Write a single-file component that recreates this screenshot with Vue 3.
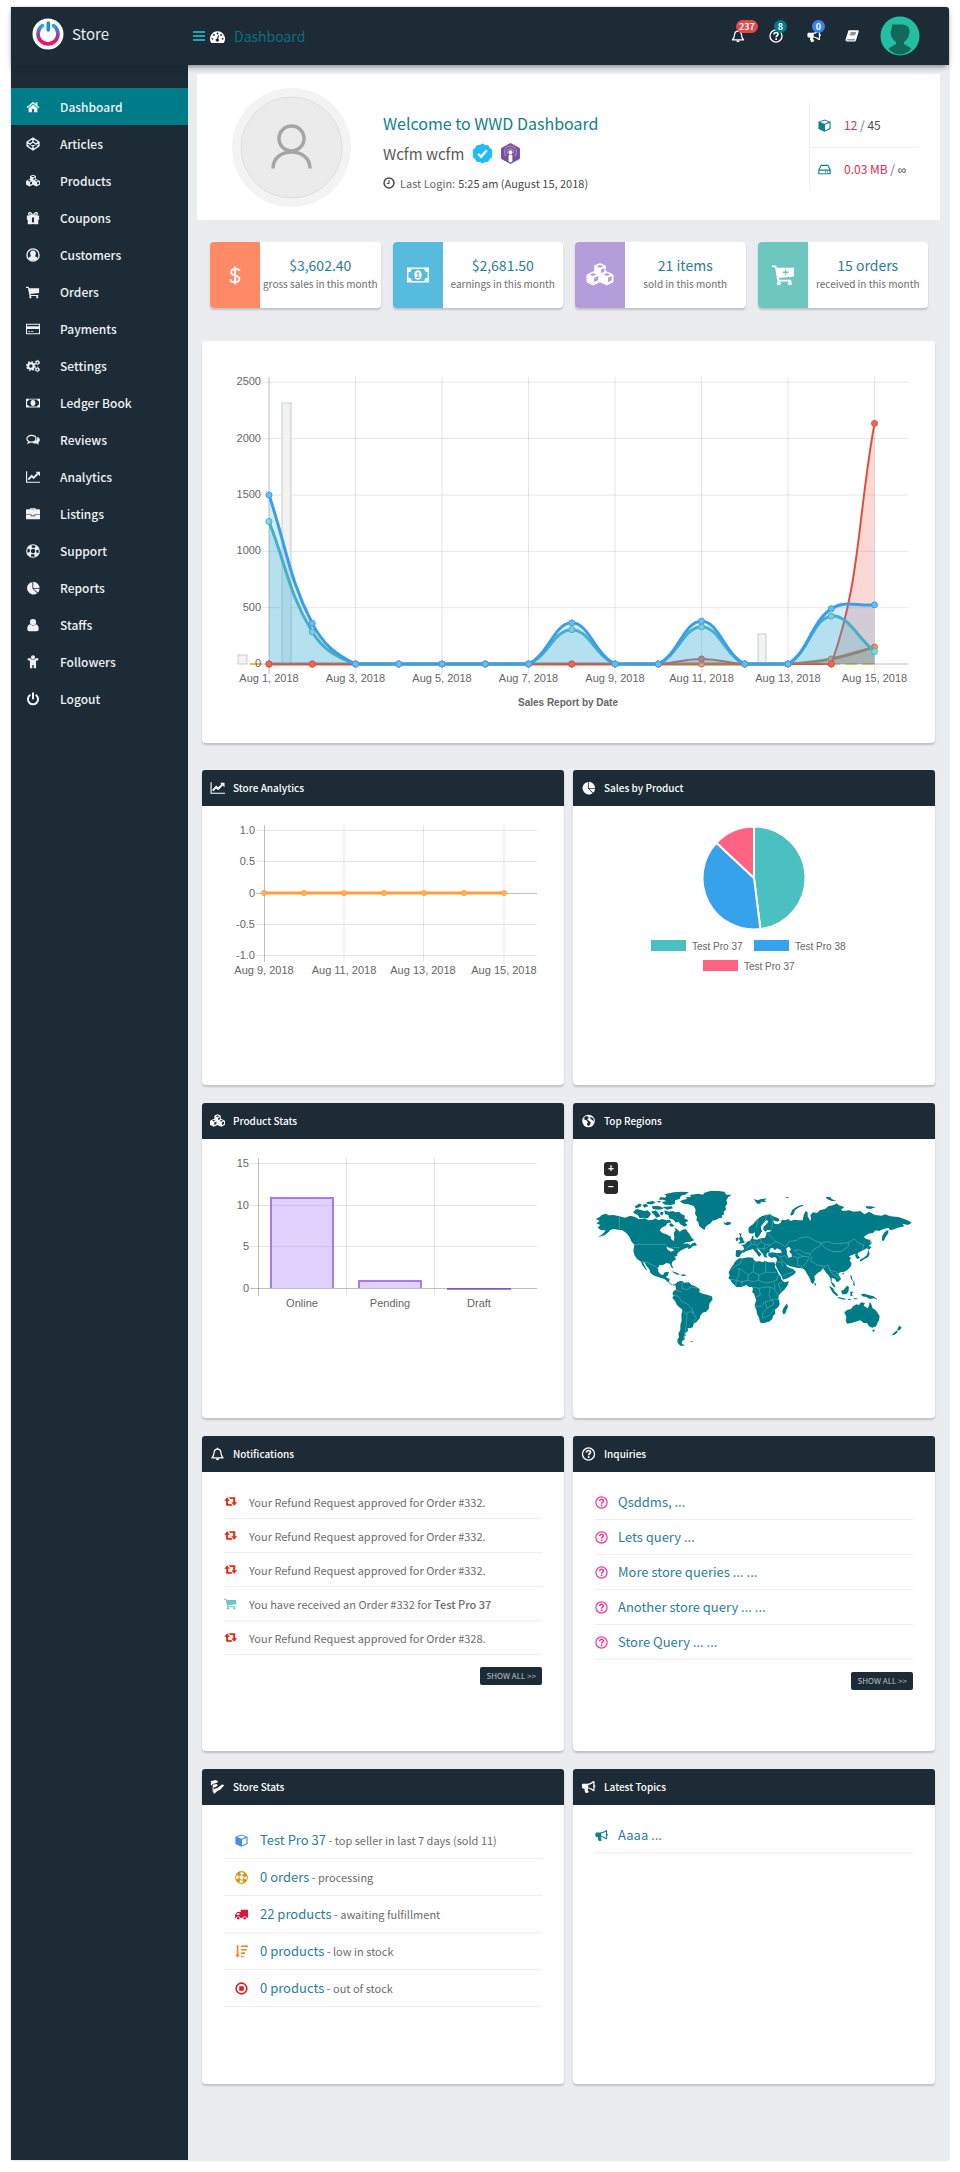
<script setup>
import { h } from 'vue'

const glyphs = {
  home: '<path d="M8 2 .6 8.3l.9 1L8 3.9l6.500 5.400.9-1L13 6.200V2.600h-2v1.900z"/><path d="M8 5 3 9.200V14h3.800v-3.600h2.400V14H13V9.200z"/>',
  codepen: '<path d="M8 1.300 14.800 5.700v4.600L8 14.700 1.200 10.300V5.700zM1.200 5.700 8 10.300l6.800-4.600M1.200 10.300 8 5.700l6.800 4.600M8 1.300v4.400M8 10.300v4.400" fill="none" stroke="currentColor" stroke-width="1.600" stroke-linejoin="round"/>',
  cubes: '<path fill-rule="evenodd" d="M9 0l3.800 1.600v3.800L16.900 7.200 18 8v4.600L13.600 15 9 12.800 4.400 15 0 12.600V8l1-.8 4.200-1.800V1.600zM9 1.300 6.600 2.200 9 3.200l2.400-1zM9.700 4.300v2.600l2.200-1V3.400zM4.400 6.700 2.200 7.600l2.200 1 2.300-1zM5.100 9.900v3l2.700-1.400V8.700zM13.600 6.700l-2.300.9 2.300 1 2.200-1zM14.300 9.900v3l2.500-1.400V8.700z"/>',
  gift: '<path d="M1 5h5.800v5H1zM9.200 5H15v5H9.200zM2 10h4.800v5H2zM9.200 10H14v5H9.200zM6.800 5h2.400v2.500H6.800z"/><path d="M7.600 5C6 1.500 3 1 3 3.200S6 5 7.600 5zm.8 0C10 1.500 13 1 13 3.200S10 5 8.400 5z" fill="none" stroke="currentColor" stroke-width="1.500"/><path d="M6.800 13h2.400v2H6.800z"/>',
  customer: '<circle cx="8" cy="8" r="7" fill="none" stroke="currentColor" stroke-width="1.500"/><path d="M8 2.800c2.200 0 3.300 1.500 3.300 3.400 0 1.300-.5 2.400-1.300 3.100 1.800.4 2.800 1.200 3 2.700C11.800 13.500 10 14.200 8 14.200S4.200 13.500 3 12c.2-1.500 1.200-2.300 3-2.700-.8-.7-1.300-1.800-1.300-3.100C4.700 4.300 5.800 2.800 8 2.800z"/>',
  cart: '<path d="M0 2h3l.5 1.800H15V9L5 10.200l.3 1.300H14v1.200H4L2.200 3.300H0z"/><circle cx="5" cy="14" r="1.300"/><circle cx="12.800" cy="14" r="1.300"/>',
  cartplus: '<path fill-rule="evenodd" d="M0 1h3l.5 1.800H16V9L5 10.200l.3 1.300H14v1.200H4L2.200 2.300H0zM9.400 3.800v1.700H7.700v1h1.700v1.700h1V6.500h1.700v-1h-1.700V3.800z"/><circle cx="5" cy="14" r="1.400"/><circle cx="13" cy="14" r="1.400"/>',
  card: '<path fill-rule="evenodd" d="M0 2h16v12H0zM1.200 3.200v1.600h13.600V3.200zM1.200 8v4.800h13.600V8z"/><path d="M2.500 10.500h2v1h-2zM5.500 10.500h3v1h-3z"/>',
  cogs: '<circle cx="5.600" cy="8" r="3.200" fill="none" stroke="currentColor" stroke-width="2.400"/><circle cx="5.600" cy="8" r="4.800" fill="none" stroke="currentColor" stroke-width="1.600" stroke-dasharray="2 1.770"/><circle cx="13" cy="4" r="1.700" fill="none" stroke="currentColor" stroke-width="1.400"/><circle cx="13" cy="4" r="2.600" fill="none" stroke="currentColor" stroke-width="1" stroke-dasharray="1.360 1.360"/><circle cx="13" cy="12" r="1.700" fill="none" stroke="currentColor" stroke-width="1.400"/><circle cx="13" cy="12" r="2.600" fill="none" stroke="currentColor" stroke-width="1" stroke-dasharray="1.360 1.360"/>',
  money: '<path fill-rule="evenodd" d="M0 3h16v10H0zM1.200 6v4a2 2 0 0 1 2 2h9.600a2 2 0 0 1 2-2V6a2 2 0 0 1-2-2H3.200a2 2 0 0 1-2 2zM8 4.600c1.700 0 2.800 1.500 2.800 3.400S9.700 11.400 8 11.400 5.200 9.900 5.200 8 6.300 4.600 8 4.600z"/><path d="M7 6.500 8 5.800h.6v3.500h.8v.9H6.800v-.9h.8V7l-.6.3z"/>',
  cash: '<path fill-rule="evenodd" d="M0 2.500h16v11H0zM1 6v4a2.300 2.300 0 0 1 2.300 2.300h9.400A2.300 2.300 0 0 1 15 10V6a2.300 2.300 0 0 1-2.300-2.300H3.300A2.300 2.300 0 0 1 1 6z"/><ellipse cx="8" cy="8" rx="2.700" ry="3.500"/><path d="M7 6.600 8 5.900h.5v3.500h.8v.8H6.800v-.8h.8V7.100l-.6.300z" fill="#56bbdd"/>',
  chat: '<path d="M6.200 2.800c3 0 5.200 1.700 5.200 3.800s-2.200 3.800-5.200 3.800l-1.200-.1-2.500 1.200.8-1.700C1.800 9 1 8 1 6.600c0-2.100 2.200-3.800 5.200-3.800z" fill="none" stroke="currentColor" stroke-width="1.400"/><path d="M12.700 4.400c1.900.7 3.100 2 3.100 3.700 0 1.300-.8 2.400-1.900 3.100l1.100 2.200-3-1.400c-2.200.3-4-.2-5.100-1.200 3.900 0 6.800-3 5.800-6.400z"/>',
  line: '<path d="M0 1.500h1.300v12H17v1.200H0z"/><path d="M2.600 11 6.500 6.800l2.200 2.200 4.600-4.700" fill="none" stroke="currentColor" stroke-width="2.200"/><path d="M11 2h5v5z"/>',
  briefcase: '<path fill-rule="evenodd" d="M5 2.500V1h6v1.500h4a1 1 0 0 1 1 1v5H9.800v1.300H6.200V8.500H0v-5a1 1 0 0 1 1-1zm1.200 0h3.600v-.4H6.200zM0 9.200h5.500v1.400h5V9.200H16V13a1 1 0 0 1-1 1H1a1 1 0 0 1-1-1z"/>',
  ring: '<circle cx="8" cy="8" r="7.200" fill="none" stroke="currentColor" stroke-width="1.300"/><circle cx="8" cy="8" r="3.200" fill="none" stroke="currentColor" stroke-width="1.200"/><circle cx="8" cy="8" r="5.200" fill="none" stroke="currentColor" stroke-width="4" stroke-dasharray="4.080 4.080" stroke-dashoffset="-2.040"/>',
  pie: '<path d="M7.300 1v7.600l5.400 5.300A7.200 7.200 0 1 1 7.300 1z"/><path d="M8.300.8a7.400 7.400 0 0 1 7.200 7.400H8.300zM9 9h6.500a7 7 0 0 1-2 4.500z"/>',
  user: '<circle cx="8" cy="4.600" r="3.600"/><path d="M4.800 7.200a4.600 4.600 0 0 0 6.400 0c2.300.5 3.300 2.300 3.300 5.300 0 1.700-.9 2.500-2.200 2.500H3.700c-1.300 0-2.200-.8-2.200-2.500 0-3 1-4.800 3.300-5.300z"/>',
  child: '<circle cx="8" cy="2.600" r="2.300"/><path d="M2 3.800h3l1.400 1.200h3.200L11 3.800h3v2.400h-2.500V15H8.800v-3.500H7.200V15H4.500V6.200H2z"/>',
  power: '<path d="M4.300 3.800a5.800 5.800 0 1 0 7.400 0M8 1.300v6" fill="none" stroke="currentColor" stroke-width="2.300" stroke-linecap="round"/>',
  gauge: '<path fill-rule="evenodd" d="M8 2.500a8 8 0 0 1 6.700 12.300H1.300A8 8 0 0 1 8 2.500zM8 3.800a1 1 0 1 0 0 2 1 1 0 0 0 0-2zM4.200 5.300a1 1 0 1 0 0 2 1 1 0 0 0 0-2zm7.600 0a1 1 0 1 0 0 2 1 1 0 0 0 0-2zM2.600 9.500a1 1 0 1 0 0 2 1 1 0 0 0 0-2zm10.800 0a1 1 0 1 0 0 2 1 1 0 0 0 0-2zM8.700 6.500 7.500 10a1.700 1.700 0 1 0 1.200.3l1.100-3.500z"/>',
  bell: '<path d="M8 2.300c2.400 0 3.700 1.600 3.900 4 .2 3 .9 4.800 2.500 6.200H1.600c1.600-1.400 2.300-3.200 2.500-6.200.2-2.400 1.500-4 3.900-4z" fill="none" stroke="currentColor" stroke-width="1.400" stroke-linejoin="round"/><path d="M7.200.8h1.600v1.600H7.200zM6 13h4a2 2 0 0 1-4 0z"/>',
  question: '<circle cx="8" cy="8" r="6.900" fill="none" stroke="currentColor" stroke-width="1.500"/><path d="M5.700 6.300C5.800 4.800 6.700 4 8.100 4c1.300 0 2.200.8 2.200 1.900 0 1.600-2.100 1.600-2.100 3.500M8.200 10.500v2" fill="none" stroke="currentColor" stroke-width="1.900"/>',
  horn: '<path fill-rule="evenodd" d="M13.500 1.200c.8 0 1.400.3 1.400 1v3.600a1.300 1.300 0 0 1 0 2.500v3.500c0 .7-.6 1-1.400 1-1.700-1.600-4-2.800-6-3.100-.8.500-.7 1.200 0 1.800-.5.800 0 1.200 1 2-.8 1.500-3.200 1.700-4.200.7-.4-1.300-1.200-2.600-.7-4.500H2c-.9 0-1.500-.6-1.500-1.400V5.700c0-.8.6-1.400 1.500-1.400h4.200c2.400 0 5.300-1.300 7.300-3.100zm0 1.900C11.700 4.500 9.600 5.300 7.700 5.600v2.900c1.900.3 4 1.100 5.800 2.500z"/>',
  book: '<path fill-rule="evenodd" d="M5 1.500h9.500c1 0 1.400.8 1.100 1.600l-3 9.700c-.2.800-.9 1.400-1.800 1.400H2.600c-1.500 0-2.300-1.200-1.900-2.400L3.500 3C3.800 2 4.200 1.500 5 1.500zM2.400 11.900c-.2.600.1 1 .7 1h8l.3-1zM6.300 4l-.3 1h6.300l.3-1zm-.7 2.200-.3 1h6.300l.3-1z"/>',
  clock: '<circle cx="8" cy="8" r="6.600" fill="none" stroke="currentColor" stroke-width="2"/><path d="M8 4v4.700H5" fill="none" stroke="currentColor" stroke-width="1.500"/>',
  cube: '<path fill-rule="evenodd" d="M8 .5 15.500 3.300v8.900L8 15.800.5 12.200V3.300zM8 1.900 2.800 3.800 8 5.800l5.200-2zM8.700 7v7l5.400-2.600V5z"/>',
  drive: '<path d="M1 8.700 3.700 3h8.600L15 8.700v4.500H1zM1 8.700h14" fill="none" stroke="currentColor" stroke-width="1.400" stroke-linejoin="round"/><path d="M8.500 10.300h1.300v1.300H8.500zM11 10.300h1.300v1.300H11z"/>',
  globe: '<path fill-rule="evenodd" d="M8 .8a7.200 7.200 0 1 1 0 14.400A7.200 7.200 0 0 1 8 .8zM5 2.500 3 4l.5 2.500L6 7.500l1.500 2L6 11l1.500 3 2.500-2 .5-3L8 7.500 6.500 6l2-1.500L7 2.500zM10.500 3 10 5l2.500 2 1.700 1-.6-3z"/>',
  retweet: '<path d="M3.800 2.800.3 7h2.300v6.200h8.200L9 11H5V7h2.300zM5.800 2.800h8v6.200h2.300l-3.600 4.200L9 9h2.300V5H7.600z"/>',
  truck: '<path fill-rule="evenodd" d="M7 2h9v10H0V8.500L2.800 5H7zm-3.600 4.200L1.500 8.600h3.900V6.200z"/><circle cx="4" cy="12.600" r="2.300" fill="#fff"/><circle cx="12" cy="12.600" r="2.300" fill="#fff"/><circle cx="4" cy="12.600" r="1.600"/><circle cx="12" cy="12.600" r="1.600"/>',
  sort: '<path d="M2.200 0h2v12H6l-2.800 3.700L.4 12h1.800zM7.500.5H16v2H7.500zM7.500 4.800h6.800v2H7.500zM7.500 9h4.800v2H7.500zM7.500 13.200h3v2h-3z"/>',
  stop: '<circle cx="8" cy="8" r="6.600" fill="none" stroke="currentColor" stroke-width="1.900"/><path d="M5.200 5.200h5.600v5.600H5.200z"/>',
  stats: '<path d="M0 1.500 6 0l3 2-3 1.800L2 4.500zM2 5.500l5-.8 1.500 1.500-3 2L3 8zM4.500 10 8 9l5-4 2.800.8-4.300 5-4 2L4 16l-1-3z"/><path d="M1 3v3M3 8v5" stroke="currentColor" stroke-width="1.200"/>',
  dollar: '<path d="M11.600 4.300v-1A6.500 6.500 0 0 0 8.200 2.500C6 2.500 4.700 3.600 4.700 5.200c0 3.700 7 2 7 5.600 0 1.700-1.500 2.800-3.700 2.800a7.500 7.500 0 0 1-3.700-1v-1.500M8.100.500v15" fill="none" stroke="currentColor" stroke-width="1.600"/>',
}

const Icon = (props) =>
  h('svg', {
    viewBox: props.name === 'cubes' ? '0 0 18 16' : '0 0 16 16',
    fill: 'currentColor',
    'aria-hidden': 'true',
    innerHTML: glyphs[props.name],
  })
Icon.props = ['name']

const menu = [
  ['Dashboard', 'home'], ['Articles', 'codepen'], ['Products', 'cubes'], ['Coupons', 'gift'],
  ['Customers', 'customer'], ['Orders', 'cart'], ['Payments', 'card'], ['Settings', 'cogs'],
  ['Ledger Book', 'money'], ['Reviews', 'chat'], ['Analytics', 'line'], ['Listings', 'briefcase'],
  ['Support', 'ring'], ['Reports', 'pie'], ['Staffs', 'user'], ['Followers', 'child'], ['Logout', 'power'],
]

const alerts = [
  { icon: 'bell', label: 'Notifications', count: '237', tone: 'red' },
  { icon: 'question', label: 'Inquiries', count: '8', tone: 'teal' },
  { icon: 'horn', label: 'Topics', count: '0', tone: 'blue' },
  { icon: 'book', label: 'Knowledgebase' },
]

const totals = [
  { icon: 'dollar', value: '$3,602.40', note: 'gross sales in this month', tone: 'orange' },
  { icon: 'cash', value: '$2,681.50', note: 'earnings in this month', tone: 'sky' },
  { icon: 'cubes', value: '21 items', note: 'sold in this month', tone: 'violet' },
  { icon: 'cartplus', value: '15 orders', note: 'received in this month', tone: 'mint' },
]

// Sales chart scales
const base = 323
const left = 67
const day = 43.25
const sx = (i) => left + i * day
const sy = (v) => base - (v * 281.7) / 2500

// Cubic spline through the points, with control points kept inside the plot
const spline = (values) => {
  const p = values.map((v, i) => [sx(i), sy(v)])
  const clamp = (y) => Math.min(base, Math.max(36, y))
  const controls = p.map((c, i) => {
    const a = p[i - 1] || c
    const b = p[i + 1] || c
    const d1 = Math.hypot(c[0] - a[0], c[1] - a[1])
    const d2 = Math.hypot(b[0] - c[0], b[1] - c[1])
    const fa = (0.4 * d1) / (d1 + d2)
    const fb = (0.4 * d2) / (d1 + d2)
    return {
      before: [c[0] - fa * (b[0] - a[0]), clamp(c[1] - fa * (b[1] - a[1]))],
      after: [c[0] + fb * (b[0] - a[0]), clamp(c[1] + fb * (b[1] - a[1]))],
    }
  })
  return p.slice(1).reduce(
    (d, c, i) => `${d} C${controls[i].after} ${controls[i + 1].before} ${c}`,
    `M${p[0]}`,
  )
}
const area = (values) => `${spline(values)} L${sx(14)},${base} L${sx(0)},${base}Z`

const gross = [1500, 360, 0, 0, 0, 0, 0, 365, 0, 0, 380, 0, 0, 490, 525]
const net = [1265, 285, 0, 0, 0, 0, 0, 305, 0, 0, 330, 0, 0, 425, 110]
const refund = [0, 0, 0, 0, 0, 0, 0, 0, 0, 0, 45, 0, 0, 0, 2135]
const tax = [0, 0, 0, 0, 0, 0, 0, 0, 0, 0, 0, 0, 0, 45, 150]
const series = [
  { name: 'tax', values: tax },
  { name: 'refund', values: refund },
  { name: 'net', values: net },
  { name: 'gross', values: gross },
]

const lands = [
  'M92 372 104 366 110 360 122 356 132 361 146 360 163 364 180 368 196 362 210 366 222 373 240 370 250 376 264 374 272 370 280 376 292 372 304 376 314 374 320 382 308 384 302 392 290 398 284 406 292 414 304 418 316 424 320 434 327 438 328 426 326 414 332 406 328 398 336 402 344 410 352 404 362 402 368 410 374 418 380 428 388 436 376 440 362 442 354 448 366 445 376 450 384 444 395 451 384 453 378 459 368 463 370 457 358 461 346 467 338 474 336 482 328 486 334 492 322 500 320 508 325 520 320 518 314 506 304 504 294 510 284 510 279 518 280 530 286 538 294 540 299 532 312 530 308 542 302 546 314 552 312 562 322 569 330 567 328 572 318 569 308 560 298 552 286 548 268 542 256 534 254 524 244 512 238 502 234 502 240 514 246 526 242 524 232 510 228 500 216 492 208 480 205 466 208 450 200 440 192 424 184 414 172 406 158 404 146 402 136 405 130 412 120 420 100 427 116 414 122 406 108 406 98 398 106 390 94 385 104 378Z',
  'M345 320 356 326 370 328 386 333 392 344 390 356 396 366 394 376 400 382 402 392 410 400 419 405 422 395 428 390 438 384 442 377 452 375 462 370 472 368 470 362 478 358 476 350 483 344 481 334 487 326 484 316 490 306 501 299 484 299 478 290 460 288 436 288 418 293 414 299 400 296 374 300 378 306 362 307 366 312 352 315Z',
  'M298 298 326 292 350 290 372 292 360 299 348 302 344 312 330 316 330 326 318 330 300 329 290 322 304 318 294 314 282 314 286 306 300 308 304 302Z',
  'M298 346 312 350 322 348 332 352 342 350 350 358 360 362 358 370 371 377 360 383 368 390 358 395 346 388 340 380 332 383 326 374 312 370 310 360 300 358Z',
  'M204 352 214 342 226 344 238 348 248 346 258 356 254 364 248 370 234 368 224 370 218 360 210 356Z',
  'M210 334 222 326 230 328 226 336 212 340Z M232 330 244 326 250 334 238 338Z M244 322 262 318 272 322 262 328 248 328Z M260 334 278 332 290 336 296 342 280 344 264 342Z M258 350 272 346 280 354 286 364 274 368 268 360Z M288 350 296 352 292 362 284 356Z M276 318 288 318 282 324Z M318 384 328 392 320 396 312 390Z M292 336 320 334 324 340 306 344Z',
  'M474 381 481 384 488 380 497 382 498 387 488 391 480 389Z M380 446 390 442 396 452 386 451Z',
  'M318 529 330 531 346 538 336 539 326 533Z M346 539 358 538 364 542 352 543Z',
  'M330 568 338 560 350 557 358 563 372 562 380 570 388 572 398 578 404 582 403 592 414 596 428 600 440 604 443 612 438 620 433 626 432 640 424 650 413 653 406 662 404 670 394 682 386 686 384 696 376 700 368 700 369 708 360 714 363 720 357 726 360 732 352 738 350 745 360 752 346 752 338 744 337 734 342 726 340 716 346 704 346 690 350 676 349 660 352 644 342 636 336 630 330 618 322 608 326 602 322 596 326 588 333 584 332 576Z',
  'M516 494 524 490 534 490 548 487 564 488 566 494 574 500 582 498 594 502 598 498 612 502 628 502 631 510 629 516 636 526 640 536 648 546 650 554 658 562 672 559 668 570 660 582 650 592 642 600 640 610 643 618 644 628 640 636 630 644 631 656 624 662 622 672 612 680 600 683 588 685 584 678 582 668 576 656 574 644 569 634 570 626 574 616 570 606 568 598 561 590 564 584 562 576 552 576 544 570 530 576 514 576 508 570 500 562 496 554 490 550 494 542 491 532 498 518 506 508 510 500Z',
  'M666 625 669 636 664 646 661 656 654 657 652 648 656 638Z',
  'M513 466 522 465 534 468 531 474 526 480 524 485 516 487 512 482Z',
  'M530 468 538 462 534 454 528 450 540 448 546 440 554 437 560 430 562 422 566 424 565 432 574 434 588 430 600 428 604 418 604 412 614 410 620 406 606 406 600 410 594 402 597 394 606 386 610 378 604 376 596 384 588 394 588 402 592 408 586 416 582 424 576 430 570 424 570 412 562 416 552 414 550 404 552 396 564 388 572 378 580 370 590 364 602 360 616 358 624 364 640 370 644 376 638 380 624 376 628 386 640 388 648 382 650 374 660 376 670 372 676 378 688 374 700 376 713 376 716 360 722 348 728 352 728 364 736 378 738 370 736 360 744 352 756 354 764 346 780 342 790 334 806 330 815 325 822 331 838 336 828 344 834 348 852 346 866 350 886 348 898 358 912 350 930 360 950 362 960 358 976 364 1000 366 1018 372 1032 378 1040 384 1028 390 1012 386 1018 394 998 398 990 402 976 406 970 398 956 402 942 408 932 406 924 414 910 416 896 426 904 432 914 434 916 446 910 456 902 462 890 468 878 474 880 482 886 488 876 492 870 482 872 476 862 480 852 484 858 490 854 496 860 506 856 516 848 524 838 530 826 532 820 536 824 544 828 552 820 560 814 560 810 552 800 548 800 560 808 568 812 578 804 574 798 562 796 550 790 540 784 534 774 520 768 528 758 534 748 544 750 554 744 568 738 562 734 550 726 536 720 526 712 520 698 519 686 516 676 514 662 508 668 516 676 520 684 522 693 530 688 538 678 544 668 550 654 554 650 544 644 534 636 520 631 508 634 502 636 492 630 486 620 489 610 483 610 474 622 472 636 474 650 474 648 466 636 460 630 466 622 458 614 462 614 472 606 474 604 480 608 488 598 486 594 478 584 466 574 458 580 468 590 478 582 486 574 474 564 462 552 466 542 469 536 474Z',
  'M522 414 530 416 528 424 534 430 536 438 541 442 532 445 520 446 526 438 520 430 526 426Z M512 430 519 427 520 436 513 439Z',
  'M566 312 578 316 588 312 606 310 598 316 604 322 588 320 586 326 576 326Z M676 358 682 344 694 336 708 330 718 330 700 338 690 346 686 358 678 362Z M782 306 796 306 800 312 814 318 800 318 786 312Z M902 334 918 334 932 337 916 342 904 340Z M660 306 672 306 668 310Z M624 632 628 632 626 636Z',
  'M970 404 970 414 962 426 956 438 950 436 952 422 960 410Z M916 432 920 444 916 452Z M910 452 920 456 912 464 906 460Z M910 464 914 476 910 486 898 492 886 500 884 494 896 488 906 480Z',
  'M792 572 804 580 810 590 820 600 816 604 804 594 798 584Z M816 606 830 608 844 612 838 614 820 610Z M828 588 836 584 846 572 852 576 850 590 844 598 832 598Z M856 590 866 590 860 596 864 604 856 602Z M888 598 898 596 910 600 926 604 938 614 926 610 914 612 904 606 892 604Z M856 540 860 542 862 554 868 560 870 572 864 570 866 562 858 552Z M748 562 754 568 750 574Z M846 612 860 612 854 616Z M866 608 882 612 868 613Z M832 534 838 534 834 540Z',
  'M838 652 848 644 858 642 864 634 874 628 882 630 888 622 900 624 896 632 908 640 912 632 914 620 919 628 922 638 932 646 938 654 944 664 942 676 936 686 934 694 922 698 912 694 906 684 896 684 886 676 872 680 860 684 846 686 842 676 844 666Z M921 704 930 704 926 712Z',
  'M1002 692 1010 697 1004 706 996 706Z M996 706 998 712 988 720 980 721 986 714Z M374 738 384 738 380 741Z',
]
const borders = 'M163 364V405M208 448H300L314 460 330 458 344 458M228 500 246 502 262 510 272 514 280 524M352 560 350 580 366 584 380 576 398 580M324 600 340 604 350 620 366 626 380 640 386 656 394 670 384 682M350 645 360 656 376 650 386 656M366 656 364 690 356 730M332 586 350 590M516 520 530 524 550 540 564 530 568 500M530 490 526 506 496 522M564 530 582 540 602 532V500M602 532H634M582 540 580 556 600 564 616 562 634 556 640 540M550 540 548 556 564 560 580 556M512 574 514 556 530 560 548 556M530 574 532 558M494 552 514 556 522 540 522 522M564 576 582 580 600 576 616 576 628 582 640 602M582 580 586 600 572 606M628 562 630 582M616 576 612 600 620 616 600 620 588 634 570 634M600 620 606 640 592 656 592 668 608 664 622 652 628 640M606 640 626 628 622 612 642 614M652 562 640 566 648 590M606 360 600 378M614 358 624 376 620 402M580 370 574 398M604 412 616 422 632 440 616 450 600 448 590 440 584 430M556 436 560 448 548 456 544 462M560 448 576 450 590 440M576 450 580 460 600 462 616 450M600 448 596 466M564 440 574 444M632 440 648 446 660 456M634 478 646 486 654 500 668 510M646 486 660 482 666 492M634 500 650 502 654 514M654 542 670 536 684 530M662 456 672 440 694 436 706 428 730 426 748 436 768 444 764 454 748 462 736 476 720 474 704 464 688 466M688 466 698 476 716 484 698 488 684 484M698 488V510L712 516M716 484 732 486 726 500 712 516M732 476 740 488 736 496 756 510 778 514 790 510M768 444 790 440 804 446 828 446 850 442 868 432 880 444 896 450 892 466M768 444 778 458 804 470 828 470 850 454 850 442M778 514 774 526M790 510 794 526 806 540M794 526 814 530 822 548M806 540 820 548M870 478 880 480'

const dataPoints = [0, 1, 2, 3, 4, 5, 6]
const notes = [
  { icon: 'retweet', text: 'Your Refund Request approved for Order #332.' },
  { icon: 'retweet', text: 'Your Refund Request approved for Order #332.' },
  { icon: 'retweet', text: 'Your Refund Request approved for Order #332.' },
  { icon: 'cart', text: 'You have received an Order #332 for ', strong: 'Test Pro 37' },
  { icon: 'retweet', text: 'Your Refund Request approved for Order #328.' },
]
const inquiries = ['Qsddms, ...', 'Lets query ...', 'More store queries ... ...', 'Another store query ... ...', 'Store Query ... ...']
const stats = [
  { icon: 'cube', link: 'Test Pro 37', text: 'top seller in last 7 days (sold 11)', tone: 'c-blue' },
  { icon: 'ring', link: '0 orders', text: 'processing', tone: 'c-gold' },
  { icon: 'truck', link: '22 products', text: 'awaiting fulfillment', tone: 'c-crimson' },
  { icon: 'sort', link: '0 products', text: 'low in stock', tone: 'c-orange' },
  { icon: 'stop', link: '0 products', text: 'out of stock', tone: 'c-red' },
]
</script>

<template>
  <div class="frame">
    <header class="topbar">
      <a class="brand" href="#">
        <svg class="logo" viewBox="0 0 32 32" aria-hidden="true">
          <defs>
            <linearGradient id="ring" x1="0" y1="0" x2="0" y2="1">
              <stop offset="0" stop-color="#2aa5dc" />
              <stop offset=".45" stop-color="#7a4fb0" />
              <stop offset=".75" stop-color="#e5156f" />
            </linearGradient>
          </defs>
          <circle cx="16" cy="16" r="15.500" fill="#fff" />
          <path d="M10.500 7.600a10 10 0 1 0 11 0" fill="none" stroke="url(#ring)" stroke-width="3.600" stroke-linecap="round" />
          <path d="M16.300 5v7" stroke="#1c8fd0" stroke-width="3.600" stroke-linecap="round" />
        </svg>
        <span>Store</span>
      </a>
      <button class="toggle" type="button" aria-label="Toggle menu"><i></i><i></i><i></i></button>
      <Icon class="gauge" name="gauge" />
      <h1>Dashboard</h1>
      <nav class="alerts" aria-label="Shortcuts">
        <a v-for="a in alerts" :key="a.label" href="#" :aria-label="a.label">
          <Icon :name="a.icon" />
          <span v-if="a.count" class="badge" :class="a.tone">{{ a.count }}</span>
        </a>
      </nav>
      <a class="me" href="#" aria-label="Profile">
        <svg viewBox="0 0 40 40" aria-hidden="true">
          <circle cx="20" cy="20" r="19.500" fill="#22bfa2" />
          <path d="M12.500 8c2 1 3 .5 7.500.5 6 0 9.500 2 9.500 6.500 0 5-2.500 9-5.500 11v2l7.500 4.500c-3 4-7 6-11.500 6s-8.500-2-11.500-6L16 28v-2c-3-2-5.500-6-5.500-10l1-2.500z" fill="#13685c" />
        </svg>
      </a>
    </header>

    <div class="body">
      <aside class="sidebar">
        <nav aria-label="Store manager">
          <a v-for="([label, icon], i) in menu" :key="label" href="#" :class="{ active: i === 0 }">
            <Icon :name="icon" /><span>{{ label }}</span>
          </a>
        </nav>
      </aside>

      <main>
        <section class="welcome">
          <div class="photo">
            <svg viewBox="0 0 119 119" aria-hidden="true">
              <circle cx="59.500" cy="59.500" r="59.500" fill="#f3f3f3" />
              <circle cx="59.500" cy="59.500" r="50.500" fill="#ebebeb" stroke="#dedede" />
              <circle cx="59.500" cy="50.500" r="12.500" fill="none" stroke="#a5a5a5" stroke-width="3.500" />
              <path d="M41 80.500c0-22 37-22 37 0" fill="none" stroke="#a5a5a5" stroke-width="3.500" />
            </svg>
          </div>
          <div class="hello">
            <h2>Welcome to WWD Dashboard</h2>
            <p class="who">
              <span>Wcfm wcfm</span>
              <svg viewBox="0 0 22 22" role="img" aria-label="Verified">
                <path d="M11 1l2.700 1.500 3.100.2 1.400 2.700 2.500 1.800-.3 3.800.3 3.800-2.500 1.800-1.400 2.700-3.100.2L11 21l-2.700-1.500-3.100-.2-1.400-2.700-2.500-1.800.3-3.800-.3-3.800 2.500-1.800 1.400-2.700 3.100-.2z" fill="#1fbdf5" stroke="#1fbdf5" stroke-linejoin="round" />
                <path d="m6.500 11.500 3 3 6-7" fill="none" stroke="#fff" stroke-width="2.400" />
              </svg>
              <svg viewBox="0 0 22 22" role="img" aria-label="Member">
                <path d="m11 .5 9.500 5.200v10.600L11 21.500l-9.500-5.200V5.700z" fill="#74509c" stroke="#74509c" stroke-linejoin="round" />
                <path d="M6.500 14a6.300 6.300 0 1 1 9 0M8.300 11.500a3.400 3.400 0 1 1 5.400 0" fill="none" stroke="#a78bc4" stroke-width="1.200" />
                <circle cx="11" cy="9.700" r="2" fill="#fff" />
                <path d="M9 13.500c0-2 4-2 4 0v6l-2 1-2-1z" fill="#fff" />
              </svg>
            </p>
            <p class="login"><Icon name="clock" /><span>Last Login:</span> 5:25 am (August 15, 2018)</p>
          </div>
          <div class="limits">
            <p><Icon name="cube" /><span><b>12</b> / <em>45</em></span></p>
            <p><Icon name="drive" /><span><b>0.03 MB</b> / <em class="inf">∞</em></span></p>
          </div>
        </section>

        <section class="totals" aria-label="Totals">
          <article v-for="t in totals" :key="t.value" class="total">
            <div class="tile" :class="t.tone"><Icon :name="t.icon" /></div>
            <div class="figures"><a href="#">{{ t.value }}</a><p>{{ t.note }}</p></div>
          </article>
        </section>

        <section class="sales">
          <svg class="chart" viewBox="0 0 733 402" role="img" aria-label="Sales Report by Date">
            <g class="grid">
              <path v-for="v in [500, 1000, 1500, 2000, 2500]" :key="v" :d="`M58 ${sy(v)}H706`" />
              <path v-for="i in [2, 4, 6, 8, 10, 12, 14]" :key="i" :d="`M${sx(i)} 36V333`" />
            </g>
            <path class="axis" d="M67 36V333M58 323H706" />
            <g class="ghost">
              <rect x="36" y="314" width="9" height="9" />
              <rect x="80" y="62" width="9" height="261" />
              <rect x="556" y="293" width="8" height="30" />
            </g>
            <path class="dash" d="M48 323H673" />
            <g v-for="s in series" :key="s.name" :class="s.name">
              <path class="fill" :d="area(s.values)" />
              <path class="stroke" :d="spline(s.values)" />
              <circle v-for="(v, i) in s.values" :key="i" :cx="sx(i)" :cy="sy(v)" r="3" />
            </g>
            <g class="red-dots"><circle v-for="i in [0, 1, 7, 13]" :key="i" :cx="sx(i)" cy="323" r="3" /></g>
            <g class="end">
              <text v-for="v in [0, 500, 1000, 1500, 2000, 2500]" :key="v" x="59" :y="sy(v) + 3">{{ v }}</text>
            </g>
            <g class="mid">
              <text v-for="i in [0, 2, 4, 6, 8, 10, 12, 14]" :key="i" :x="sx(i)" y="341">Aug {{ i + 1 }}, 2018</text>
              <text class="caption" x="366" y="365">Sales Report by Date</text>
            </g>
          </svg>
        </section>

        <div class="panels">
          <section class="panel">
            <h3><Icon name="line" />Store Analytics</h3>
            <svg class="chart" viewBox="0 0 362 279" role="img" aria-label="Store Analytics">
              <path class="grid" d="M54 24.500H335M54 55.500H335M54 118.500H335M54 149.500H335M142 19V156M221.500 19V156M302 19V156" />
              <path class="axis" d="M62.500 19V156M54 87.500H335" />
              <path d="M62 87H302" fill="none" stroke="#ff9f40" stroke-width="3" />
              <circle v-for="i in dataPoints" :key="i" :cx="62 + i * 40" cy="87" r="2.500" fill="#ffb566" stroke="#ff9f40" />
              <g class="end">
                <text x="53" y="28">1.0</text><text x="53" y="59">0.5</text><text x="53" y="91">0</text>
                <text x="53" y="122">-0.5</text><text x="53" y="153">-1.0</text>
              </g>
              <g class="mid">
                <text x="62" y="168">Aug 9, 2018</text><text x="142" y="168">Aug 11, 2018</text>
                <text x="221" y="168">Aug 13, 2018</text><text x="302" y="168">Aug 15, 2018</text>
              </g>
            </svg>
          </section>

          <section class="panel">
            <h3><Icon name="pie" />Sales by Product</h3>
            <svg class="chart" viewBox="0 0 362 279" role="img" aria-label="Sales by Product">
              <g stroke="#fff" stroke-width="2" stroke-linejoin="round">
                <path d="M181 72V20.500A51.500 51.500 0 0 1 187.400 123.100Z" fill="#4bc0c0" />
                <path d="M181 72 187.400 123.100A51.500 51.500 0 0 1 143.400 36.800Z" fill="#36a2eb" />
                <path d="M181 72 143.400 36.800A51.500 51.500 0 0 1 181 20.500Z" fill="#ff6384" />
              </g>
              <rect x="78" y="134" width="35" height="11" fill="#4bc0c0" />
              <rect x="181" y="134" width="35" height="11" fill="#36a2eb" />
              <rect x="130" y="154" width="35" height="11" fill="#ff6384" />
              <g class="legend">
                <text x="119" y="144">Test Pro 37</text><text x="222" y="144">Test Pro 38</text>
                <text x="171" y="164">Test Pro 37</text>
              </g>
            </svg>
          </section>

          <section class="panel">
            <h3><Icon name="cubes" />Product Stats</h3>
            <svg class="chart" viewBox="0 0 362 279" role="img" aria-label="Product Stats">
              <path class="grid" d="M48 24.500H335M48 66.500H335M48 107.500H335M144.500 19V157M232.500 19V157" />
              <g fill="#9966ff" fill-opacity=".3">
                <rect x="68" y="59" width="63" height="90" /><rect x="157" y="142" width="63" height="7" />
              </g>
              <path d="M69 149V59H131V149M157 149V142H219V149M245 150H309" fill="none" stroke="#a77bf0" stroke-width="2" />
              <path class="axis" d="M56.500 19V157M48 149.500H335" />
              <g class="end">
                <text x="47" y="28">15</text><text x="47" y="70">10</text><text x="47" y="111">5</text><text x="47" y="153">0</text>
              </g>
              <g class="mid">
                <text x="100" y="168">Online</text><text x="188" y="168">Pending</text><text x="277" y="168">Draft</text>
              </g>
            </svg>
          </section>

          <section class="panel map">
            <h3><Icon name="globe" />Top Regions</h3>
            <svg class="chart" viewBox="24 132 1086 837" role="img" aria-label="World map">
              <path v-for="(d, i) in lands" :key="i" :d="d" fill="#007c89" />
              <path d="M664 460 672 455 678 462 673 470 680 478 680 486 670 488 666 476Z" fill="#fff" />
              <path d="M304 456 318 460 328 466 318 470 308 464Z" fill="#fff" />
              <path :d="borders" fill="none" stroke="#79b9c0" stroke-width="1.500" stroke-linejoin="round" />
            </svg>
            <div class="zoom">
              <button type="button" aria-label="Zoom in">+</button>
              <button type="button" aria-label="Zoom out">−</button>
            </div>
          </section>

          <section class="panel">
            <h3><Icon name="bell" />Notifications</h3>
            <div class="content">
              <ul class="notes">
                <li v-for="(n, i) in notes" :key="i">
                  <Icon :name="n.icon" :class="n.icon" /><span>{{ n.text }}<b v-if="n.strong">{{ n.strong }}</b></span>
                </li>
              </ul>
              <a class="more" href="#">SHOW ALL &gt;&gt;</a>
            </div>
          </section>

          <section class="panel">
            <h3><Icon name="question" />Inquiries</h3>
            <div class="content">
              <ul class="links">
                <li v-for="q in inquiries" :key="q"><Icon name="question" class="c-pink" /><a href="#">{{ q }}</a></li>
              </ul>
              <a class="more" href="#">SHOW ALL &gt;&gt;</a>
            </div>
          </section>

          <section class="panel">
            <h3><Icon name="stats" />Store Stats</h3>
            <div class="content">
              <ul class="stats">
                <li v-for="s in stats" :key="s.icon">
                  <Icon :name="s.icon" :class="s.tone" /><span><a href="#">{{ s.link }}</a> - {{ s.text }}</span>
                </li>
              </ul>
            </div>
          </section>

          <section class="panel">
            <h3><Icon name="horn" />Latest Topics</h3>
            <div class="content">
              <ul class="links">
                <li><Icon name="horn" class="c-teal" /><a href="#">Aaaa ...</a></li>
              </ul>
            </div>
          </section>
        </div>
      </main>
    </div>
  </div>
</template>

<style>
body {
  background: #fff;
}
</style>

<style scoped>
.frame {
  margin: 7px 11px 11px;
  font-family: "Noto Sans CJK SC", "Source Sans Pro", sans-serif;
  font-size: 12px;
  line-height: 16px;
  color: #6d6d6d;
  border-radius: 0 3px 0 0;
  box-shadow: 0 0 2px #b9bec6;
}
.frame * {
  box-sizing: border-box;
}
h1, h2, h3, p, ul {
  margin: 0;
  padding: 0;
  font-weight: 400;
}
ul {
  list-style: none;
}
a {
  color: #2b7c9e;
  text-decoration: none;
}
svg {
  display: block;
  flex: none;
}

.topbar {
  position: relative;
  display: flex;
  align-items: center;
  height: 58px;
  padding-right: 29px;
  background: #1d2b36;
  border-radius: 0 3px 0 0;
  box-shadow: 0 3px 6px -2px rgba(20, 30, 45, .6);
}
.brand {
  display: flex;
  align-items: center;
  gap: 8px;
  width: 182px;
  padding: 0 0 4px 21px;
  font-size: 15px;
  line-height: 20px;
  color: #e8edf0;
}
.logo {
  width: 32px;
  height: 32px;
}
.toggle {
  display: flex;
  flex-direction: column;
  gap: 2px;
  width: 12px;
  padding: 0;
  border: 0;
  background: none;
}
.toggle i {
  height: 2px;
  background: #21a5ad;
}
.gauge {
  width: 15px;
  height: 15px;
  margin: 0 9px 0 5px;
  color: #fff;
}
.topbar h1 {
  font-size: 14px;
  line-height: 20px;
  color: #0b6f7c;
}
.alerts {
  display: flex;
  gap: 24px;
  margin-left: auto;
}
.alerts a {
  position: relative;
  color: #fff;
}
.alerts svg {
  width: 14px;
  height: 14px;
}
.badge {
  position: absolute;
  left: 5px;
  top: -9px;
  min-width: 13px;
  padding: 0 3px;
  border-radius: 7px;
  font-size: 9px;
  line-height: 13px;
  font-weight: 700;
  text-align: center;
}
.red { background: #e4484d; }
.teal { background: #007c89; }
.blue { background: #3b86e6; }
.me {
  margin-left: 21px;
}
.me svg {
  width: 40px;
  height: 40px;
}

.body {
  display: flex;
}
.sidebar {
  width: 177px;
  flex: none;
  padding-top: 23px;
  background: #1d2b36;
}
.sidebar a {
  display: flex;
  align-items: center;
  height: 37px;
  padding-left: 15px;
  font-weight: 500;
  color: #eef2f4;
}
.sidebar svg {
  width: 14px;
  height: 14px;
  margin-right: 20px;
}
.sidebar .active {
  background: #007c89;
}

main {
  flex: 1;
  min-width: 0;
  padding: 9px 0 76px;
  background: #ebecf0;
}
.welcome {
  display: flex;
  align-items: center;
  height: 146px;
  margin: 0 9px;
  padding: 0 21px 0 35px;
  background: #fff;
}
.photo svg {
  width: 119px;
  height: 119px;
}
.hello {
  margin-left: 32px;
  padding-top: 9px;
}
.hello h2 {
  font-size: 16px;
  line-height: 24px;
  color: #11818c;
}
.who {
  display: flex;
  align-items: center;
  gap: 7px;
  margin: 8px 0;
  font-size: 15px;
  line-height: 22px;
  color: #5b5b5b;
}
.who span {
  margin-right: 1px;
}
.who svg {
  width: 21px;
  height: 21px;
}
.login {
  display: flex;
  align-items: center;
  gap: 3px;
  font-size: 11px;
  line-height: 20px;
  color: #4a4a4a;
}
.login svg {
  width: 12px;
  height: 12px;
  margin-right: 2px;
}
.login span {
  color: #66666e;
}
.limits {
  width: 110px;
  margin-left: auto;
  border-left: 1px solid #f0f0f0;
}
.limits p {
  display: flex;
  align-items: center;
  height: 44px;
  padding-left: 8px;
  white-space: nowrap;
}
.limits p + p {
  border-top: 1px solid #f0f0f0;
}
.limits svg {
  width: 13px;
  height: 13px;
  margin-right: 13px;
  color: #11818c;
}
.limits b {
  font-weight: 400;
  color: #d8304f;
}
.limits em {
  font-style: normal;
  color: #4a4a4a;
}
.limits .inf {
  font-family: "Liberation Sans", sans-serif;
}

.totals {
  display: grid;
  grid-template-columns: repeat(4, 1fr);
  gap: 12px;
  margin: 22px 21px 33px 22px;
}
.total {
  display: flex;
  height: 66px;
  border-radius: 4px;
  background: #fff;
  overflow: hidden;
  box-shadow: 0 2px 2px rgba(0, 0, 0, .18);
}
.tile {
  display: grid;
  place-items: center;
  width: 50px;
  flex: none;
  color: #fff;
}
.tile svg {
  width: 24px;
  height: 22px;
}
.tile.orange { background: #ff8a65; }
.tile.orange svg { height: 19px; }
.tile.sky { background: #56bbdd; }
.tile.violet { background: #b39ddb; }
.tile.violet svg { width: 28px; height: 24px; }
.tile.mint { background: #6ec7bf; }
.figures {
  flex: 1;
  padding-top: 13px;
  text-align: center;
  font-size: 10px;
  white-space: nowrap;
}
.figures a {
  display: block;
  font-size: 14px;
  line-height: 20px;
}
.figures p {
  line-height: 18px;
}

.sales, .panel {
  border-radius: 4px;
  background: #fff;
  box-shadow: 0 2px 2px rgba(0, 0, 0, .18);
}
.sales {
  margin: 0 14px 27px;
}
.chart {
  width: 100%;
  height: auto;
  font-family: "Liberation Sans", sans-serif;
  font-size: 11px;
}
.chart text {
  fill: #666;
}
.chart .legend text {
  font-size: 10px;
}
.chart .caption {
  font-size: 10px;
  font-weight: 700;
}
.end text { text-anchor: end; }
.mid text { text-anchor: middle; }
.grid { fill: none; stroke: rgba(0, 0, 0, .1); }
.axis { fill: none; stroke: rgba(0, 0, 0, .25); }
.ghost { fill: #f1f2f2; stroke: #c9cbcf; }
.dash { stroke: #f0b548; stroke-width: 2; stroke-dasharray: 12 5; }
.stroke { fill: none; stroke-width: 2; }
.net .fill { fill: #4bc0c0; fill-opacity: .24; }
.net .stroke, .net circle { stroke: #4bb5bd; }
.net .stroke { stroke-width: 3; }
.net circle { fill: #8fd8dc; }
.gross .fill { fill: #36a2eb; fill-opacity: .2; }
.gross .stroke { stroke: #3a9fe8; stroke-width: 3; }
.gross circle { fill: #6bbcf0; stroke: #3a9fe8; }
.refund .fill { fill: #e74c3c; fill-opacity: .22; }
.refund .stroke { stroke: #df4e42; }
.refund circle, .red-dots { fill: #e96a5d; stroke: #e14d3f; }
.tax .fill { fill: #b06820; fill-opacity: .3; }
.tax .stroke { stroke: #b9743b; stroke-width: 3; }
.tax circle { fill: #e3a36c; stroke: #d96e30; }

.panels {
  display: grid;
  grid-template-columns: 1fr 1fr;
  gap: 18px 9px;
  margin: 0 14px;
}
.panel {
  position: relative;
  min-width: 0;
}
.panel h3 {
  display: flex;
  align-items: center;
  height: 36px;
  padding-left: 8px;
  border-radius: 3px 3px 0 0;
  background: #1d2b36;
  font-size: 10px;
  font-weight: 500;
  color: #fff;
}
.panel h3 svg {
  width: 15px;
  height: 14px;
  margin-right: 8px;
}
.zoom {
  position: absolute;
  left: 31px;
  top: 59px;
  display: grid;
  gap: 4px;
}
.zoom button {
  width: 14px;
  height: 14px;
  padding: 0;
  border: 0;
  border-radius: 3px;
  background: #292929;
  color: #fff;
  font: 700 10px/14px "Liberation Sans", sans-serif;
}
.content {
  display: flex;
  flex-direction: column;
  min-height: 279px;
  padding: 13px 22px;
}
.content li {
  display: flex;
  align-items: center;
  border-bottom: 1px solid #eee;
}
.content li svg {
  width: 13px;
  height: 13px;
}
.notes li {
  height: 34px;
  gap: 12px;
  font-size: 11px;
}
.notes b {
  font-weight: 500;
}
.retweet { color: #ee2a15; }
.cart { color: #6ec7bf; }
.links li {
  height: 35px;
  gap: 10px;
}
.links, .stats a {
  font-size: 13px;
}
.stats {
  padding-top: 4px;
  font-size: 11px;
}
.stats li {
  height: 37px;
  padding-left: 11px;
  gap: 12px;
}
.more {
  align-self: flex-end;
  margin-top: 12px;
  padding: 0 6px;
  border-radius: 2px;
  background: #1d2b36;
  color: #b9c2c8;
  font-size: 8px;
  line-height: 18px;
}
.c-pink { color: #f0389c; }
.c-teal { color: #11818c; }
.c-blue { color: #3f8fee; }
.c-gold { color: #cf9a14; }
.c-crimson { color: #dc1440; }
.c-orange { color: #f08020; }
.c-red { color: #dd1c20; }
</style>
